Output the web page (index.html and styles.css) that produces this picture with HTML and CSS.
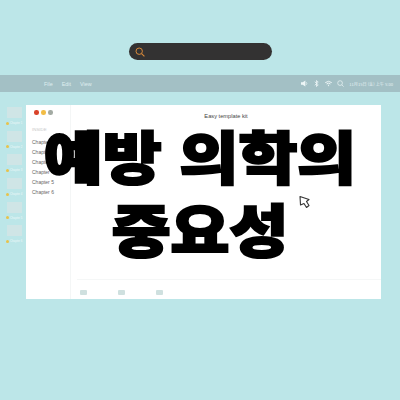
FILE: index.html
```html
<!DOCTYPE html>
<html lang="ko">
<head>
<meta charset="utf-8">
<title>예방 의학의 중요성</title>
<link rel="stylesheet" href="styles.css">
</head>
<body>
<div class="page">
  <div class="search">
    <svg class="search-icon" viewBox="0 0 10 10" width="10" height="10"><circle cx="4.2" cy="4.2" r="3.2" fill="none" stroke="#d98a3a" stroke-width="1"/><path d="M6.6 6.6L9.4 9.4" stroke="#d98a3a" stroke-width="1.1" fill="none"/></svg>
  </div>
  <div class="menubar">
    <div class="menus"><span>File</span><span>Edit</span><span>View</span></div>
    <div class="status">
      <svg viewBox="0 0 8 8" width="7" height="7"><path d="M0 2.5h2L5 .5v7L2 5.5H0z" fill="#eef6f7"/><path d="M6 2.5q1.4 1.5 0 3" stroke="#eef6f7" stroke-width=".8" fill="none"/></svg>
      <svg viewBox="0 0 8 8" width="7" height="7"><path d="M2 2l4 3.5L4 7.5V.5L6 2.5 2 6" stroke="#eef6f7" stroke-width=".9" fill="none"/></svg>
      <svg viewBox="0 0 8 8" width="7" height="7"><path d="M.3 3q3.7-3 7.4 0M1.8 4.5q2.2-1.8 4.4 0" stroke="#eef6f7" stroke-width="1.1" fill="none"/><path d="M4 7.5L3 5.5h2z" fill="#eef6f7"/></svg>
      <svg viewBox="0 0 8 8" width="7" height="7"><circle cx="3.5" cy="3.5" r="2.7" fill="none" stroke="#eef6f7" stroke-width=".8"/><path d="M5.5 5.5L7.6 7.6" stroke="#eef6f7" stroke-width=".8"/></svg>
      <span class="clock">11月15日 (金) 上午 5:00</span>
    </div>
  </div>
  <div class="desk">
    <div class="dock">
      <div class="dock-item"><div class="thumb"></div><div class="tag"><i></i>Chapter 1</div></div>
      <div class="dock-item"><div class="thumb"></div><div class="tag"><i></i>Chapter 2</div></div>
      <div class="dock-item"><div class="thumb"></div><div class="tag"><i></i>Chapter 3</div></div>
      <div class="dock-item"><div class="thumb"></div><div class="tag"><i></i>Chapter 4</div></div>
      <div class="dock-item"><div class="thumb"></div><div class="tag"><i></i>Chapter 5</div></div>
      <div class="dock-item"><div class="thumb"></div><div class="tag"><i></i>Chapter 6</div></div>
    </div>
    <div class="window">
      <div class="side">
        <div class="dots"><i class="red"></i><i class="yellow"></i><i class="gray"></i></div>
        <div class="side-head">INSIDE</div>
        <div class="side-list">
          <div>Chapter 1</div><div>Chapter 2</div><div>Chapter 3</div><div>Chapter 4</div><div>Chapter 5</div><div>Chapter 6</div>
        </div>
      </div>
      <div class="main">
        <div class="win-title">Easy template kit</div>
        <div class="main-body"></div>
        <div class="toolbar"><i></i><i></i><i></i></div>
      </div>
    </div>
  </div>
  <h1 class="headline">예방 의학의<br>중요성</h1>
  <svg class="cursor" viewBox="0 0 14 16" width="14" height="16"><path d="M3 1.5L12 4.5 9.5 6.5 12 10.5 9.5 12.5 7 8.5 3.5 10z" fill="#fff" stroke="#333" stroke-width="1.1" stroke-linejoin="round"/></svg>
</div>
</body>
</html>
```
FILE: styles.css
```css
* { box-sizing: border-box; }
html, body { margin: 0; padding: 0; }
body { width: 400px; height: 400px; overflow: hidden; background: #bce6e8; font-family: "Liberation Sans", Arial, sans-serif; }
.page { position: relative; width: 400px; height: 400px; padding-top: 43px; }
.search { width: 143px; height: 17px; margin-left: 129px; border-radius: 8.5px; background: #333232; display: flex; align-items: center; padding-left: 6px; }
.search-icon { display: block; }
.menubar { height: 17px; margin-top: 15px; background: #a3c0c5; display: flex; align-items: center; justify-content: space-between; padding: 0 7px 0 44px; }
.menus { display: flex; gap: 9px; font-size: 5.4px; color: #dfeef0; }
.status { display: flex; align-items: center; gap: 5px; }
.status svg { display: block; }
.clock { font-size: 4.1px; color: #e4f0f2; font-family: "Noto Sans CJK SC", "Liberation Sans", sans-serif; white-space: nowrap; }
.desk { display: flex; margin-top: 13px; align-items: flex-start; }
.dock { width: 26px; padding: 2px 0 0 6px; display: flex; flex-direction: column; gap: 3.7px; }
.dock-item { width: 17px; height: 20px; display: flex; flex-direction: column; }
.thumb { width: 15px; height: 11px; margin-left: 1px; background: #cfe5e6; }
.tag { display: flex; align-items: center; gap: 1px; margin-top: 3px; font-size: 2.8px; line-height: 4px; color: #eef8f8; white-space: nowrap; }
.tag i { width: 3px; height: 3px; border-radius: 50%; background: #e8c24a; flex: none; }
.window { width: 355px; height: 194px; background: #fff; display: flex; }
.side { width: 45px; height: 194px; border-right: 1px solid #f4f6f6; padding: 5px 0 0 6px; }
.dots { display: flex; gap: 2.5px; padding-left: 2px; }
.dots i { width: 4.5px; height: 4.5px; border-radius: 50%; }
.red { background: #d9432a; }
.yellow { background: #f2bd46; }
.gray { background: #a3aaa3; }
.side-head { margin-top: 12px; font-size: 4.4px; line-height: 6px; color: #c8c8c8; }
.side-list { margin-top: 4px; font-size: 5px; line-height: 10px; color: #666; }
.main { flex: 1; display: flex; flex-direction: column; }
.win-title { height: 23px; padding-top: 7px; text-align: center; font-size: 5.7px; line-height: 8px; color: #444; }
.main-body { flex: 1; border-bottom: 1px solid #f5f7f7; margin-left: 6px; }
.toolbar { height: 19px; display: flex; gap: 31px; padding: 10px 0 0 9px; }
.toolbar i { width: 7px; height: 5px; background: #cfe0df; border-radius: 1px; }
.headline { position: absolute; left: 0; top: 118px; width: 400px; margin: 0; text-align: center; font-family: "Noto Sans CJK KR", sans-serif; font-weight: 900; font-size: 64px; line-height: 83px; color: #000; -webkit-text-stroke: 2.5px #000; white-space: nowrap; transform: scaleY(.88); transform-origin: top center; }
.cursor { position: absolute; left: 297px; top: 195px; }
```
